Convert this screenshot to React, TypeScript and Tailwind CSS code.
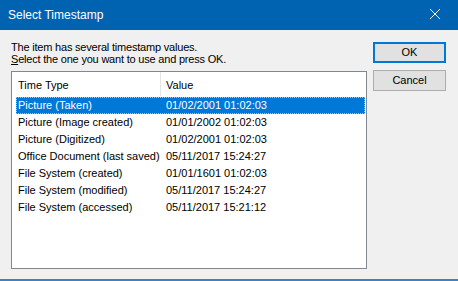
import React from "react";

const rows: [string, string][] = [
  ["Picture (Taken)", "01/02/2001 01:02:03"],
  ["Picture (Image created)", "01/01/2002 01:02:03"],
  ["Picture (Digitized)", "01/02/2001 01:02:03"],
  ["Office Document (last saved)", "05/11/2017 15:24:27"],
  ["File System (created)", "01/01/1601 01:02:03"],
  ["File System (modified)", "05/11/2017 15:24:27"],
  ["File System (accessed)", "05/11/2017 15:21:12"],
];

export default function App() {
  return (
    <div
      className="w-[458px] h-[281px] bg-[#F0F0F0] flex flex-col overflow-hidden text-[11px] text-black"
      style={{ fontFamily: '"Liberation Sans", Arial, sans-serif' }}
    >
      <div className="h-[30px] bg-[#0063B1] flex items-center justify-between shrink-0">
        <span className="pl-[8px] text-white text-[12px] leading-none">Select Timestamp</span>
        <svg width="46" height="30" viewBox="0 0 46 30" className="shrink-0">
          <path d="M18 9 L28 19 M28 9 L18 19" stroke="#fff" strokeWidth="1" />
        </svg>
      </div>
      <div className="flex flex-1">
        <div className="ml-[11px] w-[356px] flex flex-col">
          <div className="mt-[11px] leading-[12px] tracking-[-0.2px]">
            <div>The item has several timestamp values.</div>
            <div>
              <span className="underline">S</span>elect the one you want to use and press OK.
            </div>
          </div>
          <div className="mt-[6px] h-[198px] border border-[#828790] bg-white flex flex-col">
            <div className="h-[24px] flex shrink-0">
              <div className="w-[149px] pl-[6px] flex items-center pt-[2px] border-r border-[#E5E5E5]">Time Type</div>
              <div className="pl-[5px] flex items-center pt-[2px]">Value</div>
            </div>
            <div className="flex flex-col mt-[1px]">
              {rows.map(([t, v], i) => (
                <div key={i} className="h-[17px] flex items-center pl-[4px] pr-[1px]">
                  <div
                    className={
                      i === 0
                        ? "flex-1 h-[17px] flex items-center bg-[#0078D7] text-white outline outline-1 outline-dotted outline-[#99C9EF] -outline-offset-1"
                        : "flex-1 h-[17px] flex items-center"
                    }
                  >
                    <span className="w-[150px] pl-[2px] whitespace-nowrap">{t}</span>
                    <span className="whitespace-nowrap">{v}</span>
                  </div>
                </div>
              ))}
            </div>
          </div>
        </div>
        <div className="ml-[6px] mt-[12px] flex flex-col gap-[7px]">
          <button className="w-[73px] h-[21px] bg-[#E1E1E1] border-2 border-[#0078D7] flex items-center justify-center leading-none">
            OK
          </button>
          <button className="w-[73px] h-[21px] bg-[#E1E1E1] border border-[#ADADAD] flex items-center justify-center leading-none">
            Cancel
          </button>
        </div>
      </div>
      <div className="h-[2px] bg-[#3C83C6] shrink-0" />
    </div>
  );
}
